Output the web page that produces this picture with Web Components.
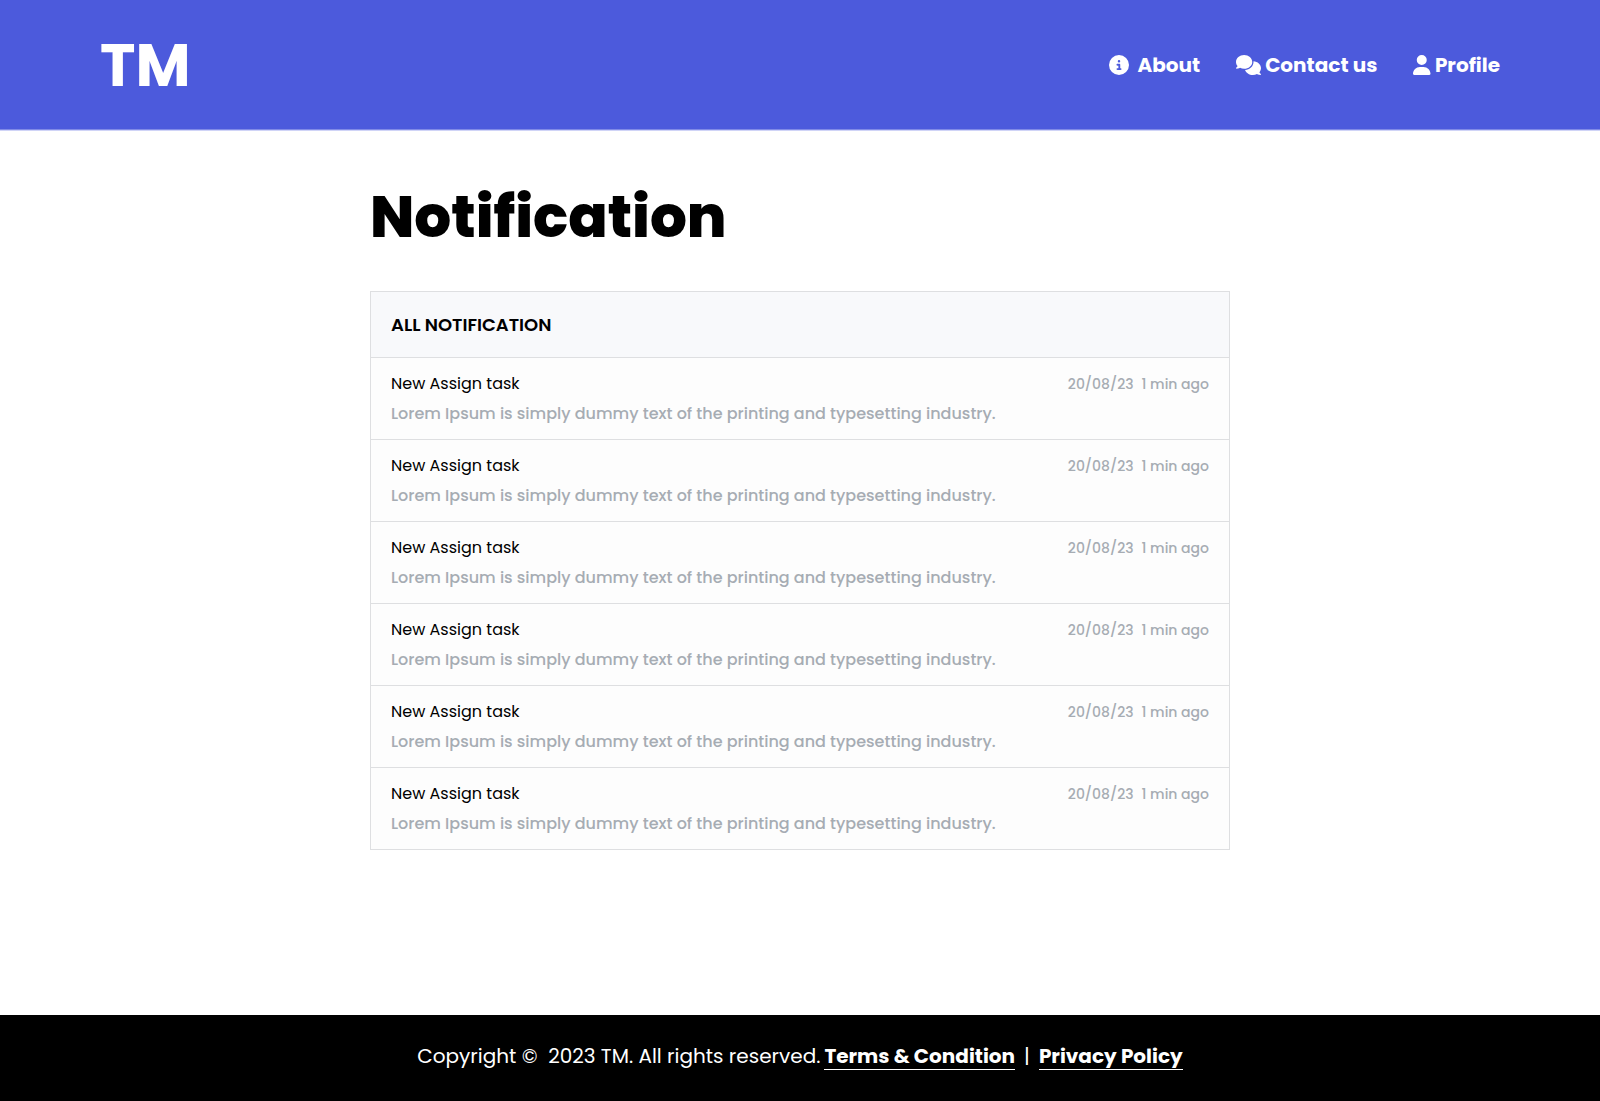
<!DOCTYPE html>
<html lang="en">
<head>
<meta charset="utf-8">
<meta name="viewport" content="width=device-width, initial-scale=1">
<title>Notification</title>
<style>
  html, body { margin: 0; min-height: 100%; }
  body { font-family: Poppins, Inter, "Open Sans", sans-serif; background: #fff; color: #000; }
</style>
</head>
<body>
<tm-app></tm-app>

<template id="tm-app">
  <style>
    :host { display: flex; flex-direction: column; min-height: 100vh; }
    main { flex: 1; box-sizing: border-box; width: 100%; max-width: 860px; margin: 0 auto; padding: 47px 0; }
    h1 { margin: 0 0 34px; font-size: 58px; line-height: 80px; font-weight: 800; }
  </style>
  <tm-header>
    <tm-nav-link icon="info" href="#about">About</tm-nav-link>
    <tm-nav-link icon="comments" href="#contact">Contact us</tm-nav-link>
    <tm-nav-link icon="user" href="#profile">Profile</tm-nav-link>
  </tm-header>
  <main>
    <h1>Notification</h1>
    <tm-notification-list></tm-notification-list>
  </main>
  <tm-footer></tm-footer>
</template>

<template id="tm-header">
  <style>
    :host { display: block; background: #4c5adc; border-bottom: 1px solid #808ae6; box-shadow: 0 1px #d0d4f7; color: #fff; }
    header { display: flex; align-items: center; justify-content: space-between; min-height: 129px; padding: 0 100px; }
    .logo { color: inherit; text-decoration: none; font-size: 60px; line-height: 72px; font-weight: 700; }
    nav { display: flex; align-items: center; gap: 36px; }
  </style>
  <header>
    <a class="logo" href="#home">TM</a>
    <nav aria-label="Main"><slot></slot></nav>
  </header>
</template>

<template id="tm-nav-link">
  <style>
    :host { display: block; }
    a { display: flex; align-items: center; gap: 4px; color: #fff; text-decoration: none; font-size: 20px; line-height: 30px; font-weight: 700; }
    :host([icon="info"]) a { gap: 8px; }
    svg { display: block; height: 20px; fill: currentColor; }
  </style>
  <a><svg aria-hidden="true"><path></path></svg><span><slot></slot></span></a>
</template>

<template id="tm-notification-list">
  <style>
    :host { display: block; border: 1px solid #dedfe1; background: #fdfdfd; }
    h2 { margin: 0; padding: 20px; font-size: 18px; line-height: 25px; font-weight: 600; text-transform: uppercase; background: #f8f9fb; }
    ul { list-style: none; margin: 0; padding: 0; }
    li { border-top: 1px solid #dedfe1; }
  </style>
  <h2>All Notification</h2>
  <ul></ul>
</template>

<template id="tm-notification">
  <style>
    :host { display: block; padding: 10px 20px; }
    .top { display: flex; align-items: baseline; justify-content: space-between; }
    h3 { margin: 0; font-size: 16px; line-height: 31px; font-weight: 400; }
    .when { display: flex; gap: 8px; font-size: 14px; line-height: 26px; font-weight: 500; color: #a6acb3; }
    p { margin: 0; font-size: 16px; line-height: 30px; font-weight: 500; color: #a6acb3; }
  </style>
  <div class="top">
    <h3><slot name="title"></slot></h3>
    <div class="when"><slot name="date"></slot><slot name="ago"></slot></div>
  </div>
  <p><slot></slot></p>
</template>

<template id="tm-footer">
  <style>
    :host { display: block; background: #000; color: #fff; }
    footer { display: flex; flex-wrap: wrap; align-items: center; align-content: center; justify-content: center; min-height: 86px; padding: 0 20px 4px; box-sizing: border-box; font-size: 20px; line-height: 26px; }
    footer span { white-space: pre; }
    .copy { margin-right: 4px; }
    .bar { margin: 0 9px; }
    a { color: inherit; text-decoration: none; font-weight: 700; border-bottom: 1px solid #fff; }
  </style>
  <footer><span class="copy">Copyright ©  2023 TM. All rights reserved.</span><a href="#terms">Terms &amp; Condition</a><span class="bar">|</span><a href="#privacy">Privacy Policy</a></footer>
</template>

<script>
  const icons = {
    info: [512, "M256 512A256 256 0 1 0 256 0a256 256 0 1 0 0 512zM216 336h24V272H216c-13.3 0-24-10.7-24-24s10.7-24 24-24h48c13.3 0 24 10.7 24 24v88h8c13.3 0 24 10.7 24 24s-10.7 24-24 24H216c-13.3 0-24-10.7-24-24s10.7-24 24-24zm40-208a32 32 0 1 1 0 64 32 32 0 1 1 0-64z"],
    comments: [640, "M208 352c114.9 0 208-78.8 208-176S322.9 0 208 0S0 78.8 0 176c0 38.6 14.7 74.3 39.6 103.4c-3.5 9.4-8.7 17.7-14.2 24.7c-4.8 6.2-9.7 11-13.3 14.3c-1.8 1.6-3.3 2.9-4.3 3.7c-.5 .4-.9 .7-1.1 .8l-.2 .2C1 327.2-1.4 334.4 .8 340.9S9.1 352 16 352c21.8 0 43.8-5.6 62.1-12.5c9.2-3.5 17.8-7.4 25.3-11.4C134.1 343.3 169.8 352 208 352zM448 176c0 112.3-99.1 196.9-216.5 207C255.8 457.4 336.4 512 432 512c38.2 0 73.9-8.7 104.7-23.9c7.5 4 16 7.9 25.2 11.4c18.3 6.9 40.3 12.5 62.1 12.5c6.9 0 13.1-4.5 15.2-11.1c2.1-6.6-.2-13.8-5.8-17.9l-.2-.2c-.2-.2-.6-.4-1.1-.8c-1-.8-2.5-2-4.3-3.7c-3.6-3.3-8.5-8.1-13.3-14.3c-5.5-7-10.7-15.4-14.2-24.7c24.9-29 39.6-64.7 39.6-103.4c0-92.8-84.9-168.9-192.6-175.5c.4 5.1 .6 10.3 .6 15.5z"],
    user: [448, "M224 256A128 128 0 1 0 224 0a128 128 0 1 0 0 256zm-45.7 48C79.8 304 0 383.8 0 482.3C0 498.7 13.3 512 29.7 512H418.3c16.4 0 29.7-13.3 29.7-29.7C448 383.8 368.2 304 269.7 304H178.3z"]
  };

  const notifications = Array.from({ length: 6 }, () => ({
    title: "New Assign task",
    date: "20/08/23",
    ago: "1 min ago",
    text: "Lorem Ipsum is simply dummy text of the printing and typesetting industry."
  }));

  class TmElement extends HTMLElement {
    constructor() {
      super();
      const template = document.getElementById(this.localName);
      this.attachShadow({ mode: "open" }).append(template.content.cloneNode(true));
    }
  }

  class TmNavLink extends TmElement {
    connectedCallback() {
      const [width, path] = icons[this.getAttribute("icon")];
      const svg = this.shadowRoot.querySelector("svg");
      svg.setAttribute("viewBox", `0 0 ${width} 512`);
      svg.style.aspectRatio = `${width} / 512`;
      svg.querySelector("path").setAttribute("d", path);
      this.shadowRoot.querySelector("a").href = this.getAttribute("href");
    }
  }

  class TmNotificationList extends TmElement {
    connectedCallback() {
      const list = this.shadowRoot.querySelector("ul");
      list.replaceChildren(...notifications.map((n) => {
        const li = document.createElement("li");
        const item = document.createElement("tm-notification");
        for (const name of ["title", "date", "ago"]) {
          const span = document.createElement("span");
          span.slot = name;
          span.textContent = n[name];
          item.append(span);
        }
        item.append(n.text);
        li.append(item);
        return li;
      }));
    }
  }

  customElements.define("tm-header", class extends TmElement {});
  customElements.define("tm-nav-link", TmNavLink);
  customElements.define("tm-notification", class extends TmElement {});
  customElements.define("tm-notification-list", TmNotificationList);
  customElements.define("tm-footer", class extends TmElement {});
  customElements.define("tm-app", class extends TmElement {});
</script>
</body>
</html>
